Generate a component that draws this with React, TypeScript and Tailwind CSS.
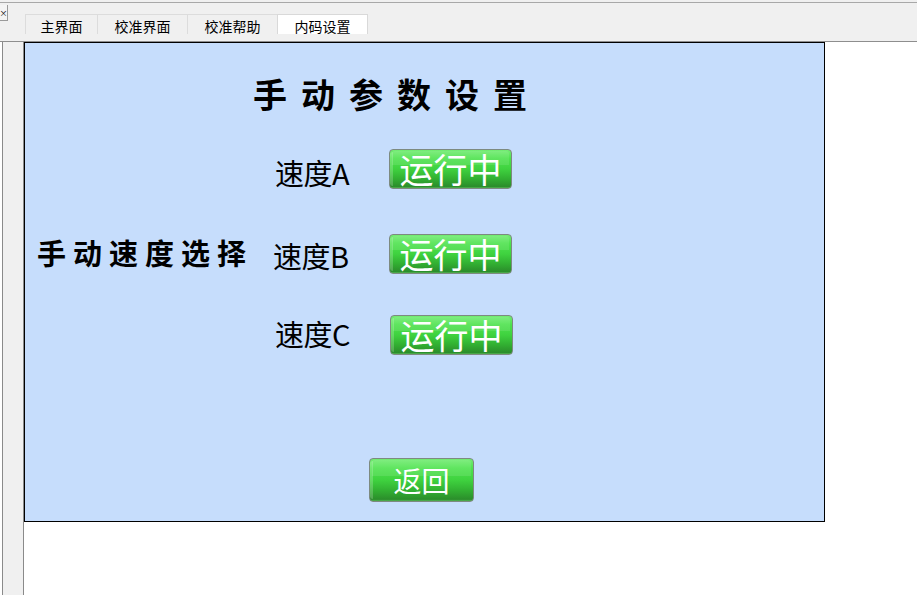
import React from "react";

const TABS = [
  { label: "主界面", w: "w-[72px]" },
  { label: "校准界面", w: "w-[90px]" },
  { label: "校准帮助", w: "w-[90px]" },
  { label: "内码设置", w: "w-[91px]", active: true },
];

const SPEEDS = [
  { label: "速度A", mt: "mt-[38px]", labelPad: "pl-[2px]", shift: "top-[3px]", btnPad: "" },
  { label: "速度B", mt: "mt-[45px]", labelPad: "", shift: "top-[1px]", btnPad: "" },
  { label: "速度C", mt: "mt-[41px]", labelPad: "pl-[2px]", shift: "-top-[2px]", btnPad: "ml-px" },
];

function GreenButton({ label, size, text }: { label: string; size: string; text: string }) {
  return (
    <button
      className={`relative flex items-center justify-center rounded-[4px] border border-[#7d8a80] bg-[linear-gradient(to_bottom,#74ec74_0%,#4ee24e_22%,#3fd23f_50%,#32b032_75%,#2b8e2b_96%,#55b455_100%)] text-white ${size}`}
    >
      <span className="absolute left-[2px] right-[2px] top-[1px] h-[38%] rounded-t-[3px] bg-white/10" />
      <span className="absolute left-0 top-[2px] bottom-[2px] w-[3px] rounded-l-[3px] bg-white/20" />
      <span className={`relative font-normal leading-[1.15] ${text}`}>{label}</span>
    </button>
  );
}

export default function App() {
  return (
    <div className="h-[595px] w-[917px] overflow-hidden bg-white font-['Noto_Sans_CJK_SC','Noto_Sans',sans-serif]">
      {/* top tab bar */}
      <div className="h-[42px] bg-[#f0f0f0] pt-[2px] border-b border-[#8e8e8e]">
        <div className="flex border-t border-[#a8a8a8]">
          <div className="mt-[2px] flex h-[16px] w-[8px] items-center justify-center border-r border-b border-[#9a9a9a] bg-[#f4f4f4]">
            <span className="text-[8px] leading-none text-black">×</span>
          </div>
          <div className="ml-[17px] mt-[11px] flex">
            {TABS.map((t) => (
              <div
                key={t.label}
                className={`flex h-[20px] items-center justify-center border-t border-l text-[14px] leading-none text-black ${t.w} ${
                  t.active ? "border-r border-[#d9d9d9] bg-white" : "border-[#dcdcdc] bg-[#f0f0f0]"
                }`}
              >
                <span className="mt-[3px]">{t.label}</span>
              </div>
            ))}
          </div>
        </div>
      </div>

      <div className="flex">
        {/* left strip */}
        <div className="h-[553px] w-[24px] pl-[2px]">
          <div className="h-full border-l border-r border-[#8a8a8a] bg-[#f0f0f0]" />
        </div>

        {/* panel */}
        <div className="flex h-[480px] w-[801px] flex-col border border-black bg-[#c6ddfc]">
          <div className="ml-[228px] mt-[34px] text-[34px] font-bold leading-none tracking-[14px] text-black">
            手动参数设置
          </div>

          {SPEEDS.map((s, i) => (
            <div key={s.label} className={`flex h-[40px] items-center ${s.mt}`}>
              <div className="w-[248px] pl-[12px]">
                {i === 1 && (
                  <span className="text-[29px] font-bold leading-none tracking-[7px] text-black">
                    手动速度选择
                  </span>
                )}
              </div>
              <div className={`w-[116px] text-[29px] leading-none tracking-[-0.5px] text-black ${s.labelPad}`}>
                <span className={`relative ${s.shift}`}>{s.label}</span>
              </div>
              <div className={s.btnPad}>
                <GreenButton label="运行中" size="h-[40px] w-[123px]" text="text-[34px]" />
              </div>
            </div>
          ))}

          <div className="ml-[344px] mt-[103px]">
            <GreenButton label="返回" size="h-[44px] w-[105px]" text="text-[28px]" />
          </div>
        </div>
      </div>
    </div>
  );
}
